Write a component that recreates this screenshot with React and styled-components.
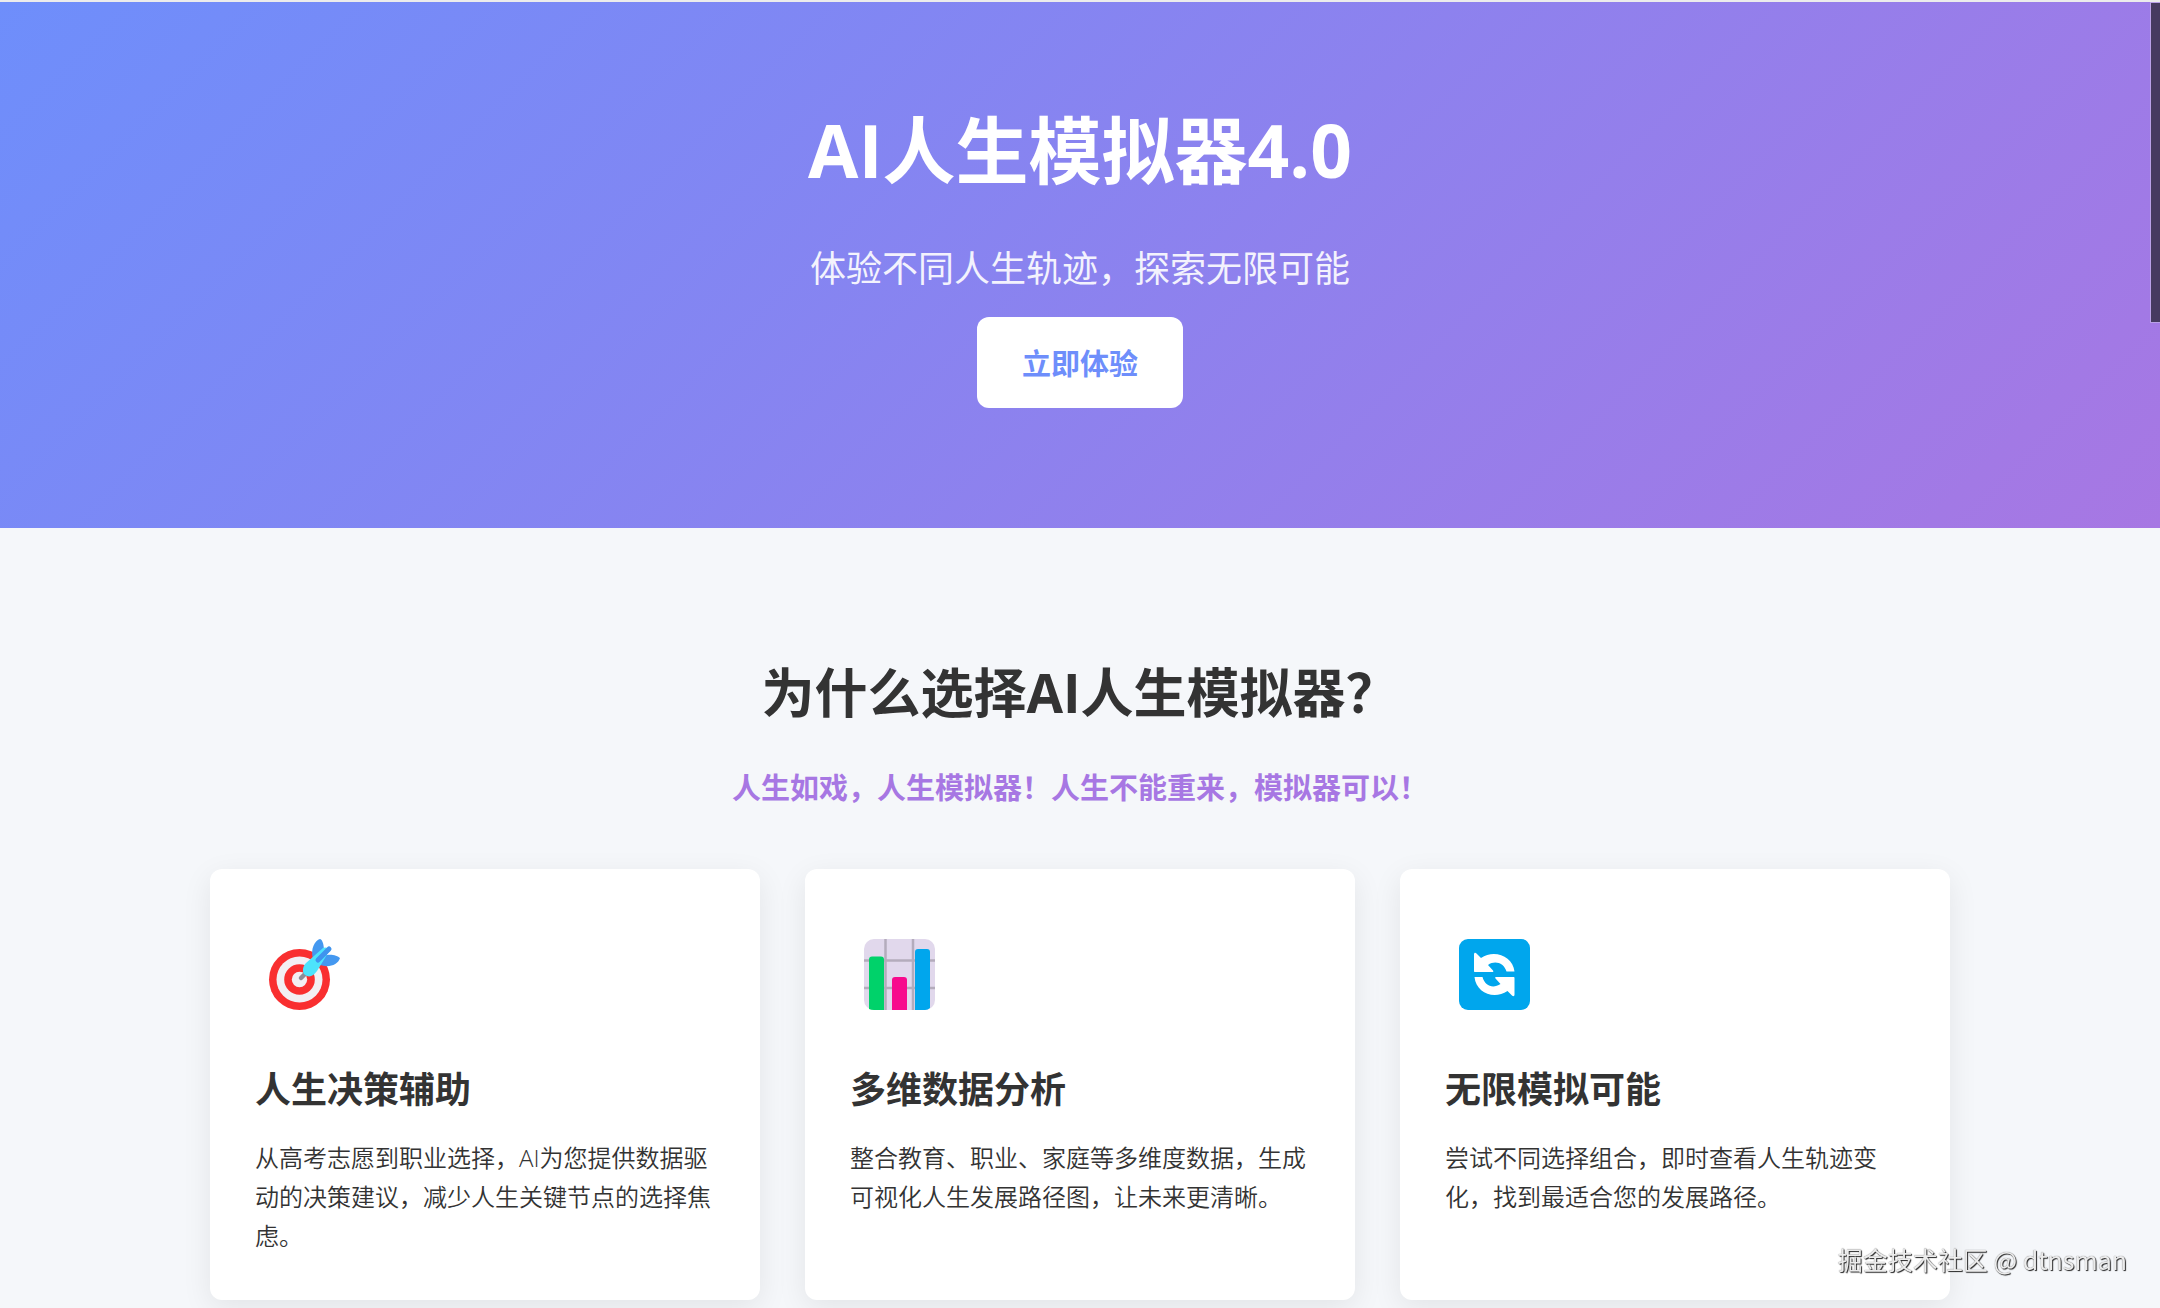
import React from 'react';
import styled, { createGlobalStyle } from 'styled-components';

const GlobalStyle = createGlobalStyle`
  *, *::before, *::after { box-sizing: border-box; }
  html { scrollbar-width: none; }
  body {
    margin: 0;
    font-family: 'Open Sans', 'Noto Sans CJK SC', sans-serif;
    font-size: 24px;
    line-height: 39px;
    color: #333;
    background: #f5f7fa;
  }
`;

const Page = styled.div.withConfig({ displayName: 'Page' })`
  min-height: 100vh;
  overflow: hidden;
  border-top: 2px solid #ececec;
`;

const Hero = styled.header.withConfig({ displayName: 'Hero' })`
  display: flex;
  flex-direction: column;
  align-items: center;
  padding: 90px 30px 120px;
  color: #fff;
  text-align: center;
  background: linear-gradient(135deg, #6e8efb, #a777e3);
`;

const HeroTitle = styled.h1.withConfig({ displayName: 'HeroTitle' })`
  margin: 0 0 32px;
  font-size: 73px;
  line-height: 116px;
  font-weight: 700;
`;

const HeroText = styled.p.withConfig({ displayName: 'HeroText' })`
  margin: 0 0 19px;
  font-size: 36px;
  line-height: 58px;
  opacity: 0.9;
`;

const HeroButton = styled.button.withConfig({ displayName: 'HeroButton' })`
  padding: 24px 45px 21px;
  border: none;
  border-radius: 12px;
  background: #fff;
  color: #6e8efb;
  font-family: inherit;
  font-size: 29px;
  line-height: 46px;
  font-weight: 700;
  cursor: pointer;
`;

const Features = styled.main.withConfig({ displayName: 'Features' })`
  max-width: 1800px;
  margin: 0 auto;
  padding: 123px 30px 8px;
`;

const SectionTitle = styled.h2.withConfig({ displayName: 'SectionTitle' })`
  margin: 0 0 30px;
  font-size: 53px;
  line-height: 84px;
  text-align: center;
`;

const Tagline = styled.p.withConfig({ displayName: 'Tagline' })`
  margin: 0 0 58px;
  font-size: 29px;
  line-height: 46px;
  font-weight: 700;
  color: #a777e3;
  text-align: center;
`;

const CardGrid = styled.div.withConfig({ displayName: 'CardGrid' })`
  display: grid;
  grid-template-columns: repeat(3, 1fr);
  gap: 45px;
`;

const Card = styled.article.withConfig({ displayName: 'Card' })`
  padding: 45px;
  border-radius: 12px;
  background: #fff;
  box-shadow: 0 8px 30px rgba(0, 0, 0, 0.08);
`;

const CardIcon = styled.div.withConfig({ displayName: 'CardIcon' })`
  display: flex;
  padding: 25px 14px;
  margin-bottom: 26px;

  svg {
    display: block;
    width: 71px;
    height: 71px;
    overflow: visible;
  }
`;

const CardTitle = styled.h3.withConfig({ displayName: 'CardTitle' })`
  margin: 0 0 19px;
  font-size: 36px;
  line-height: 58px;
`;

const CardText = styled.p.withConfig({ displayName: 'CardText' })`
  margin: 0;
  font-weight: 350;
`;

const ScrollThumb = styled.div.withConfig({ displayName: 'ScrollThumb' })`
  position: fixed;
  top: 2px;
  right: 0;
  width: 10px;
  height: 321px;
  border: solid #b9a0e8;
  border-width: 1px 0 1px 1px;
  background: #463a60;
`;

const Watermark = styled.div.withConfig({ displayName: 'Watermark' })`
  position: fixed;
  right: 33px;
  bottom: 29px;
  font-family: 'Noto Sans CJK SC', sans-serif;
  font-size: 25px;
  color: #ececec;
  text-shadow: 1px 1px 1px #222, 0 0 1px rgba(0, 0, 0, 0.6);
`;

const TargetIcon = () => (
  <svg viewBox="0 0 71 71" aria-hidden="true">
    <circle cx="30.5" cy="40.5" r="30.5" fill="#f92f30" />
    <circle cx="30.5" cy="40.5" r="23" fill="#f3eff3" />
    <circle cx="30.5" cy="40.5" r="15.3" fill="#f92f30" />
    <circle cx="30.5" cy="40.5" r="7.7" fill="#f3eff3" />
    <path d="M32 39l6-6" stroke="#8c8c98" strokeWidth="4.5" strokeLinecap="round" />
    <path d="M44 20C41 10 46 1 51 0c3 1 4 7 4 12l3 4c5-1 11 1 13 3-2 7-11 10-20 7z" fill="#4498f0" />
    <path d="M37 24L54 9c4-2 8 2 5 5L48 32c-4 6-9 7-13 3-2-3-1-8 2-11z" fill="#4de3fc" />
    <path d="M49 21L60 10" stroke="#3f93ee" strokeWidth="5" strokeLinecap="round" />
  </svg>
);

const ChartIcon = () => (
  <svg viewBox="0 0 71 71" aria-hidden="true">
    <rect width="71" height="71" rx="10" fill="#e1d8ec" />
    <path d="M21.5 0v71M49 0v71M0 21.5h71M0 49h71" stroke="#b4acbc" strokeWidth="2.5" />
    <path d="M5 70V20.500a3 3 0 0 1 3-3h9a3 3 0 0 1 3 3V71h-10q-3 0-5-1z" fill="#00d26a" />
    <path d="M28 71V41a3 3 0 0 1 3-3h9a3 3 0 0 1 3 3v30z" fill="#f70a8d" />
    <path d="M51 71V13a3 3 0 0 1 3-3h9a3 3 0 0 1 3 3v56q-2 2-5 2z" fill="#00a6ed" />
  </svg>
);

const RefreshIcon = () => (
  <svg viewBox="0 0 71 71" aria-hidden="true">
    <rect width="71" height="71" rx="9" fill="#00a6ed" />
    <path
      d="M15 15.500c0-2 1.500-2 2.500-1l4.500 4.500C35 10 54 17 55.500 32.500H47.500C45 24 36 21 29 26l5 5.500c.7 1 .3 1.500-.7 1.500H16c-.7 0-1-.4-1-1z"
      fill="#fff"
    />
    <path
      d="M55.500 55.500c0 2-1.500 2-2.500 1L48.500 52C35 61 17 54 15.500 38H23.500C26 47 34 50 41.500 45l-5-5.500c-.7-1-.3-1.500.7-1.500H54.500c.7 0 1 .4 1 1z"
      fill="#fff"
    />
  </svg>
);

const FEATURES = [
  {
    Icon: TargetIcon,
    title: '人生决策辅助',
    text: '从高考志愿到职业选择，AI为您提供数据驱动的决策建议，减少人生关键节点的选择焦虑。',
  },
  {
    Icon: ChartIcon,
    title: '多维数据分析',
    text: '整合教育、职业、家庭等多维度数据，生成可视化人生发展路径图，让未来更清晰。',
  },
  {
    Icon: RefreshIcon,
    title: '无限模拟可能',
    text: '尝试不同选择组合，即时查看人生轨迹变化，找到最适合您的发展路径。',
  },
];

const App = () => (
  <Page lang="zh-CN">
    <GlobalStyle />
    <Hero>
      <HeroTitle>AI人生模拟器4.0</HeroTitle>
      <HeroText>体验不同人生轨迹，探索无限可能</HeroText>
      <HeroButton type="button">立即体验</HeroButton>
    </Hero>
    <Features>
      <SectionTitle>为什么选择AI人生模拟器？</SectionTitle>
      <Tagline>人生如戏，人生模拟器！人生不能重来，模拟器可以！</Tagline>
      <CardGrid>
        {FEATURES.map(({ Icon, title, text }) => (
          <Card key={title}>
            <CardIcon>
              <Icon />
            </CardIcon>
            <CardTitle>{title}</CardTitle>
            <CardText>{text}</CardText>
          </Card>
        ))}
      </CardGrid>
    </Features>
    <ScrollThumb />
    <Watermark>掘金技术社区 @ dtnsman</Watermark>
  </Page>
);

export default App;
